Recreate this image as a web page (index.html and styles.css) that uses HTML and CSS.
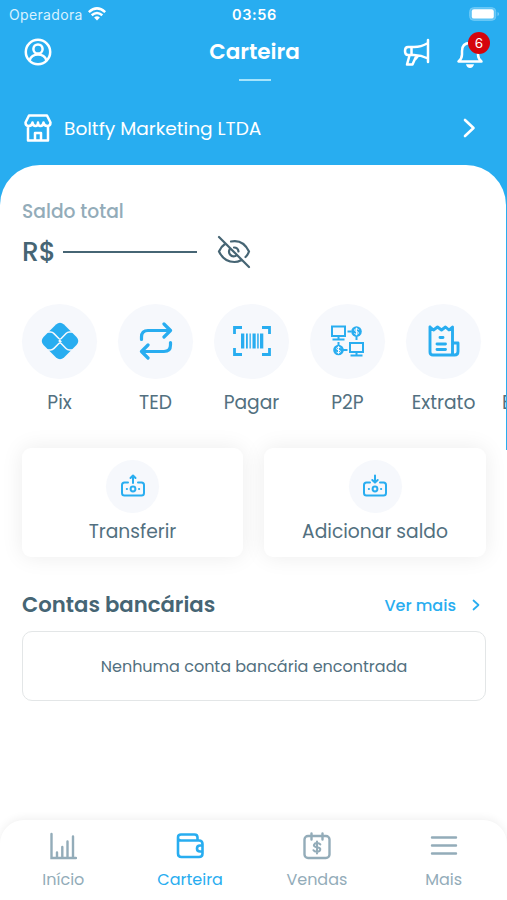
FILE: index.html
```html
<!DOCTYPE html>
<html lang="pt-BR">
<head>
<meta charset="utf-8">
<meta name="viewport" content="width=device-width, initial-scale=1">
<title>Carteira</title>
<link rel="stylesheet" href="styles.css">
</head>
<body>
<div class="app">
  <div class="status">
    <div class="carrier"><span class="t-op">Operadora</span>
      <svg width="18" height="14" viewBox="0 0 18 14" fill="none" stroke="#fff" stroke-width="2.5"><path d="M.8 5.100Q9-2.400 17.200 5.100M3.700 8.300q5.300-4.600 10.600 0"/><path d="M9 13.500l-2.900-3q2.900-2.300 5.800 0z" fill="#fff" stroke="none"/></svg>
    </div>
    <span class="t-clock">03:56</span>
    <svg class="battery" width="31" height="14" viewBox="0 0 31 14"><rect x=".7" y=".7" width="26" height="12.600" rx="3.800" fill="#5bc2f5" stroke="#73ccf7"/><rect x="2.800" y="2.200" width="22" height="9.400" rx="2.200" fill="#fff"/><path d="M28.500 5v4q1.600-.7 1.600-2t-1.600-2z" fill="#73ccf7"/></svg>
  </div>
  <header class="topbar">
    <svg class="user" width="28" height="28" viewBox="0 0 28 28" fill="none" stroke="#fff" stroke-width="2.500"><circle cx="14" cy="14" r="12.200"/><circle cx="14" cy="11" r="4.600"/><path d="M5.500 22.500Q7.500 16.600 14 16.600t8.500 5.900"/></svg>
    <div class="title"><h1>Carteira</h1><i></i></div>
    <div class="actions">
      <svg width="27" height="28" viewBox="0 0 27 28" fill="none" stroke="#fff" stroke-width="2.500" stroke-linejoin="round" stroke-linecap="round"><path d="M25 2v22M25 5Q18 9 11 9H5Q2 9 2 13t3 4h6q7 0 14 3.500M8.500 9v8M6.500 17.500L4 26.500h5.500l4-9M12.500 21l2.500-3"/></svg>
      <div class="bell">
        <svg width="28" height="32" viewBox="0 0 28 32" fill="none" stroke="#fff" stroke-width="2.500" stroke-linejoin="round"><path d="M14 2.500v2.500M2.500 23.500h23Q22 20.500 22 16.500V13q0-8-8-8T6 13v3.500q0 4-3.500 7z"/><path d="M10 26.300h8q-.8 3.700-4 3.700t-4-3.700z" fill="#fff" stroke="none"/></svg>
        <span class="badge">6</span>
      </div>
    </div>
  </header>
  <div class="company">
    <svg width="28" height="28" viewBox="0 0 28 28" fill="none" stroke="#fff" stroke-width="2.500" stroke-linejoin="round"><path d="M5 1.500h18l3.500 7q0 3.500-3.200 3.500Q20 12 19.500 8.500 19 12 16.500 12T14 8.500Q14 12 11.500 12T8.500 8.500Q8 12 4.700 12 1.500 12 1.500 8.500zM4 12.500v14h20v-14M11 26.500V19h6v7.500"/></svg>
    <span class="t-company">Boltfy Marketing LTDA</span>
    <svg class="go" width="13" height="20" viewBox="0 0 13 20" fill="none" stroke="#fff" stroke-width="2.600" stroke-linecap="round" stroke-linejoin="round"><path d="M2 2l8.500 8L2 18"/></svg>
  </div>
  <main class="sheet">
    <p class="label"><span>Saldo total</span></p>
    <div class="balance">
      <span class="currency">R$</span><i class="mask"></i>
      <svg width="34" height="34" viewBox="0 0 34 34" fill="none" stroke="#466574" stroke-width="2.200" stroke-linecap="round"><path d="M2 2l30 30M8 9Q4 11.500 2 16.500 7 27 17.500 27q3.500 0 6-1.500M14 6.500q12-2.500 18 10-1 3-3.500 5.500M13 13.500q-2 3.500 0 6t5.500 1.500M17 12.500q4 0 4.500 4"/></svg>
    </div>
    <nav class="shortcuts">
      <a><b class="spot"><svg width="38" height="38" viewBox="0 0 38 38"><path d="M15 2.500q4-3.500 8 0l12.500 12.500q3.500 4 0 8L23 35.500q-4 3.500-8 0L2.500 23q-3.500-4 0-8z" fill="#28adf0"/><path d="M5 10.200h4.500q2 0 3.500 1.500l4.800 4.900q1.200 1.100 2.400 0l4.800-4.900q1.500-1.500 3.500-1.500H33M5 28h4.500q2 0 3.500-1.500l4.800-4.900q1.200-1.100 2.400 0l4.800 4.900Q26.500 28 28.500 28H33" transform="translate(0 -.1)" fill="none" stroke="#f6f8fc" stroke-width="1.500"/><path d="M17 17.600h4v3h-4z" fill="#f6f8fc" transform="rotate(45 19 19.100) translate(5 5) scale(.74)"/></svg></b><span>Pix</span></a>
      <a><b class="spot"><svg width="34" height="38" viewBox="0 0 34 38" fill="none" stroke="#28adf0" stroke-width="3.200" stroke-linecap="round" stroke-linejoin="round"><path d="M2.500 17.500V15q0-6.500 6.500-6.500h22M25 2l6.500 6.500L25 15M31.500 20.500V23q0 6.500-6.500 6.500H3M9 23l-6.500 6.500L9 36"/></svg></b><span>TED</span></a>
      <a><b class="spot"><svg width="38" height="30" viewBox="0 0 38 30" fill="#28adf0"><path d="M1.500 8V1.500H9M29 1.500h7.500V8M36.500 22v6.500H29M9 28.500H1.500V22" fill="none" stroke="#28adf0" stroke-width="2.800"/><path d="M8 7.500h3.300v15H8zM13 7.500h1.800v15H13zM16.500 7.500h1.300v15h-1.300zM19.500 7.500h3.200v15h-3.200zM24.200 7.500h1.500v15h-1.500zM27 7.500h3.300v15H27z"/></svg></b><span>Pagar</span></a>
      <a><b class="spot"><svg width="35" height="34" viewBox="0 0 34 34" fill="none" stroke="#28adf0" stroke-width="2"><path d="M1.500 2.500h13v9.500h-13zM8 12v3.500M2 15.500h12M19.500 19h13v9h-13zM26 28v3.500M20 31.500h12M17 7.500h4M26 12v4M8 18v4M12 26h5"/><circle cx="26" cy="7.500" r="5.300" fill="#28adf0" stroke="none"/><circle cx="8" cy="26" r="5.300" fill="#28adf0" stroke="none"/><path d="M28 5.700q-.5-1-2-1t-1.800 1.200T26 7.500t1.900 1.600T26 10.300t-2-1M26 3.700v7.600M10 24.200q-.5-1-2-1t-1.800 1.200T8 26t1.900 1.600T8 28.800t-2-1M8 22.200v7.600" stroke="#f6f8fc" stroke-width="1"/></svg></b><span>P2P</span></a>
      <a><b class="spot"><svg width="32" height="32" viewBox="0 0 32 32" fill="none" stroke="#28adf0" stroke-width="2.900" stroke-linecap="round" stroke-linejoin="round"><path d="M2 2l3.500 3L9.500 2l4 3 4-3 3.500 3L24.500 2v28M2 2v25q0 3 3 3h21.500q3.500 0 3.500-3.500V18h-5.500M9 19h8.500M9 24.500h8.500M12 12.500h3"/></svg></b><span>Extrato</span></a>
      <a class="next"><b></b><span>E</span></a>
    </nav>
    <div class="cards">
      <a class="card"><b class="spot"><svg width="26" height="24" viewBox="0 0 26 24" fill="none" stroke="#28adf0" stroke-width="2" stroke-linecap="round" stroke-linejoin="round"><path d="M8 8.500H4.500Q2 8.500 2 11v8q0 2.500 2.500 2.500h17Q24 21.500 24 19v-8q0-2.500-2.500-2.500H18M13 9V2M10.500 4L13 1.500 15.500 4M6.800 15h.2M19 15h.2"/><circle cx="13" cy="15" r="2.400"/></svg></b><span>Transferir</span></a>
      <a class="card"><b class="spot"><svg width="26" height="24" viewBox="0 0 26 24" fill="none" stroke="#28adf0" stroke-width="2" stroke-linecap="round" stroke-linejoin="round"><path d="M8 8.500H4.500Q2 8.500 2 11v8q0 2.500 2.500 2.500h17Q24 21.500 24 19v-8q0-2.500-2.500-2.500H18M13 1.500V8M10.300 6L13 8.600 15.700 6M6.800 15h.2M19 15h.2"/><circle cx="13" cy="15" r="2.400"/></svg></b><span>Adicionar saldo</span></a>
    </div>
    <div class="section"><h2>Contas bancárias</h2><a class="more"><span>Ver mais</span><svg width="8" height="12" viewBox="0 0 8 12" fill="none" stroke="#28adf0" stroke-width="1.700" stroke-linecap="round" stroke-linejoin="round"><path d="M1.500 1.500L6.500 6l-5 4.500"/></svg></a></div>
    <div class="empty"><span>Nenhuma conta bancária encontrada</span></div>
  </main>
  <nav class="tabs">
    <a><svg width="28" height="28" viewBox="0 0 28 28" fill="none" stroke="#93acb9" stroke-width="2.400" stroke-linecap="round"><path d="M2.500 2v24H27M8 25v-4.500M13.300 25V15M18.500 25V9.500M24 25V4.500"/></svg><span>Início</span></a>
    <a class="on"><svg width="28" height="28" viewBox="0 0 28 28" fill="none" stroke="#28adf0" stroke-width="2.600" stroke-linejoin="round"><path d="M2 6v15.500Q2 25 5.500 25H23q3.500 0 3.500-3.500V12q0-3.500-3.500-3.500H5Q2 8.500 2 5.500T5 2.500h13.500q3 0 3 3v3M26.500 13.500H24q-3 0-3 3t3 3h2.500"/></svg><span>Carteira</span></a>
    <a><svg width="28" height="28" viewBox="0 0 28 28" fill="none" stroke="#93acb9" stroke-width="2.400" stroke-linecap="round"><rect x="1.500" y="4" width="25" height="22" rx="3.500"/><path d="M8.500 1.500v6M19.500 1.500v6"/><path d="M17.300 12.300q-1-1.300-3.300-1.300t-3 1.800 3 2.400 3.200 2.600-3.200 2-3.500-1.500M14 9.500v12" stroke-width="2.100"/></svg><span>Vendas</span></a>
    <a><svg width="28" height="28" viewBox="0 0 28 28" fill="none" stroke="#93acb9" stroke-width="2.400" stroke-linecap="round"><path d="M2 5.500h24M2 13.500h24M2 21.500h24"/></svg><span>Mais</span></a>
  </nav>
</div>
</body>
</html>
```
FILE: styles.css
```css
* { box-sizing: border-box; }
body { margin: 0; }
body, h1, h2, p { font-family: Poppins, Inter, "Liberation Sans", sans-serif; }
h1, h2, p { margin: 0; }
svg, i, b { display: block; flex: none; }
span { white-space: nowrap; }
.app {
  width: 507px; height: 900px; overflow: hidden;
  display: flex; flex-direction: column;
  background: linear-gradient(#28adf0 450px, #fff 450px);
  color: #527080;
}
.status {
  height: 28px; padding: 0 7px 0 9px; color: #fff;
  display: grid; grid-template-columns: 1fr auto 1fr; align-items: center;
  font-family: Inter, "Liberation Sans", sans-serif;
}
.carrier { display: flex; align-items: center; gap: 6px; font-size: 14px; }
.t-op { width: 73px; letter-spacing: .35px; color: #d8f2ff; }
.t-clock { font-size: 14.500px; font-weight: 600; letter-spacing: .6px; }
.battery { justify-self: end; }
.topbar {
  height: 60px; padding: 10px 22px 0 24px; color: #fff;
  display: grid; grid-template-columns: 1fr auto 1fr; align-items: start;
}
.topbar .title { display: flex; flex-direction: column; align-items: center; }
h1 { font-size: 21.500px; line-height: 28px; font-weight: 600; }
.title i { width: 32px; height: 2px; background: #a5e4fc; margin-top: 13px; }
.actions { display: flex; justify-content: flex-end; gap: 26px; }
.bell { position: relative; width: 28px; margin-right: 1px; }
.badge {
  position: absolute; left: 12px; top: -6px; width: 22px; height: 22px;
  border-radius: 50%; background: #d5050d; color: #fff;
  font: 13.500px/22px Inter, "Liberation Sans", sans-serif; text-align: center;
}
.company { height: 77px; padding: 3px 31px 0 24px; display: flex; align-items: center; color: #fff; }
.t-company { margin-left: 12px; font-size: 18.600px; }
.go { margin-left: auto; }
.sheet {
  width: 506px; flex: 1; padding: 34px 0 0 22px; overflow: hidden;
  background: #fff; border-radius: 40px 40px 0 0;
}
.label { font-size: 18.700px; line-height: 26px; font-weight: 500; color: #93acb9; }
.balance { height: 53px; display: flex; align-items: center; color: #466574; }
.currency { width: 41px; font-size: 26.500px; font-weight: 500; }
.mask { width: 134px; height: 2px; background: #466574; margin-right: 20px; }
.shortcuts { display: flex; gap: 21px; margin-top: 26px; height: 144px; }
.shortcuts a { width: 75px; flex: none; display: flex; flex-direction: column; align-items: center; gap: 11px; font-size: 18.700px; line-height: 26px; }
.spot { width: 75px; height: 75px; border-radius: 50%; background: #f6f8fc; display: grid; place-items: center; }
.spot svg { margin-top: -2px; }
.shortcuts .next { align-items: flex-start; }
.next b { height: 75px; }
.cards { display: grid; grid-template-columns: 221px 222px; gap: 21px; }
.card {
  height: 109px; padding-top: 12px; border-radius: 9px; background: #fff;
  box-shadow: 0 0 22px rgba(0, 0, 0, .08);
  display: flex; flex-direction: column; align-items: center; gap: 6px;
  font-size: 18.700px; line-height: 26px;
}
.card .spot { width: 53px; height: 53px; }
.section { height: 74px; padding: 21px 26px 0 0; display: flex; justify-content: space-between; color: #466574; }
h2 { font-size: 21.200px; line-height: 54px; font-weight: 600; }
.more { display: flex; align-items: center; height: 54px; gap: 16px; font-size: 16px; font-weight: 500; color: #28adf0; }
.empty {
  width: 464px; height: 70px; border: 1.500px solid #e3e6e7; border-radius: 10px;
  display: grid; place-items: center; font-size: 16px;
}
.tabs {
  height: 80px; padding-top: 12px; flex: none; background: #fff;
  border-radius: 24px 24px 0 0; box-shadow: 0 -2px 8px rgba(0, 0, 0, .06);
  display: grid; grid-template-columns: repeat(4, 1fr);
  font-size: 16px; line-height: 22px; color: #93acb9;
}
.tabs a { display: flex; flex-direction: column; align-items: center; gap: 9px; }
.tabs .on { color: #28adf0; }
```
